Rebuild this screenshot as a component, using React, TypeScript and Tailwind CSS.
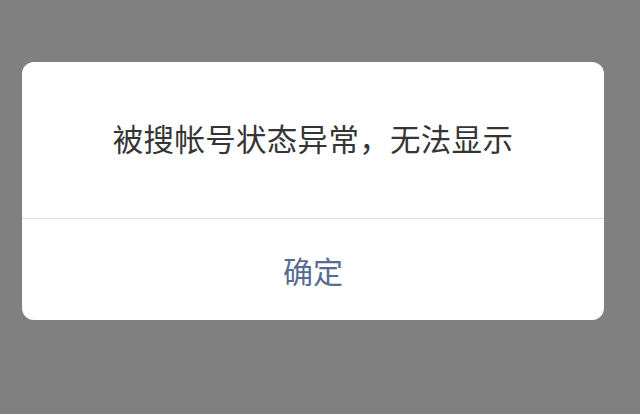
export default function App() {
  return (
    <div
      className="h-[414px] w-[640px] bg-[#808080] pl-[22px] pt-[62px]"
      style={{ fontFamily: '"Noto Sans CJK SC", "Noto Sans", sans-serif' }}
    >
      <div className="w-[582px] overflow-hidden rounded-[12px] bg-white">
        <div className="flex h-[156px] items-center justify-center pb-[2px] text-[30.5px] tracking-[0.3px] text-[#353535]">
          被搜帐号状态异常，无法显示
        </div>
        <div className="h-px bg-[#e0e0e0]" />
        <button
          type="button"
          className="flex h-[101px] w-full items-center justify-center pt-[2px] text-[30px] text-[#576b95]"
        >
          确定
        </button>
      </div>
    </div>
  );
}
